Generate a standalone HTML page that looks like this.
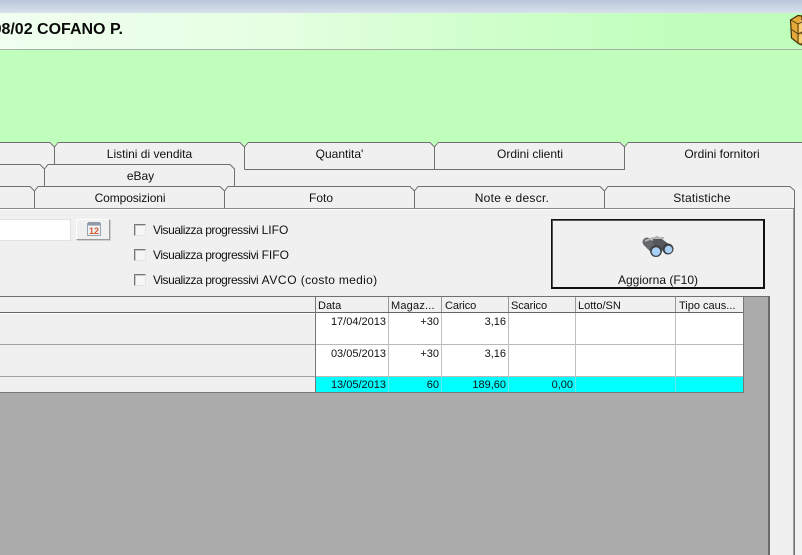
<!DOCTYPE html>
<html>
<head>
<meta charset="utf-8">
<style>
html,body{margin:0;padding:0}
body{width:802px;height:555px;overflow:hidden;position:relative;background:#f0f0f0;font-family:"Liberation Sans",sans-serif;font-size:12px;color:#111}
.a{position:absolute}
.t{position:absolute;white-space:nowrap;line-height:14px}
.c{text-align:center}
.r{text-align:right}
.v{position:absolute;width:1px}
.n{letter-spacing:-.45px}
.g{font-size:11px}
.cb{position:absolute;left:134px;width:10px;height:10px;background:#f6f6f6;border:1px solid;border-color:#777 #e4e4e4 #e4e4e4 #777;box-shadow:inset 1px 1px 0 #c8c8c8}
</style>
</head>
<body>
<div class="a" style="left:0;top:0;width:802px;height:13px;background:linear-gradient(#b9c6d9,#d8e1ec)"></div>
<div class="a" style="left:0;top:13px;width:802px;height:36px;background:linear-gradient(90deg,#f0fff0 0,#e6ffe3 33%,#d0ffcc 60%,#bfffbb 88%)"></div>
<div class="a" style="left:0;top:49px;width:802px;height:1px;background:#a9b0a9"></div>
<div class="a" style="left:0;top:50px;width:802px;height:92px;background:#bfffbb"></div>
<div class="t r" style="right:679px;top:21px;font-weight:bold;font-size:16px;line-height:18px;color:#0a0a0a">98/02 COFANO P.</div>

<svg class="a" style="left:788px;top:14px" width="14" height="32" viewBox="0 0 14 32">
<path d="M2.5 6 L10 1.5 L14 2 L14 31 L11 30 L3.5 24 Z" fill="#e4a93a" stroke="#3f2d06" stroke-width="1.2"/>
<path d="M11 8 L14 6 L14 18 L11 20 Z M11 22 L14 20 L14 29 L11 28 Z" fill="#f6cf78"/>
<path d="M3 6 L10 10 L14 8 M10 10 L10 29 M3 15 L10 20 L14 18" fill="none" stroke="#5a4210" stroke-width="1"/>
</svg>

<svg class="a" style="left:0;top:142px" width="802" height="68" viewBox="0 0 802 68">
<g fill="#f0f0f0" stroke="#707070" stroke-width="1">
<path d="M-20 27.5 V0.5 H50 L54.5 5 V27.5"/>
<path d="M54.5 27.5 V5 L58 0.5 H240 L244.5 5 V27.5"/>
<path d="M244.5 27.5 V5 L248 0.5 H430 L434.5 5 V27.5 H244.5"/>
<path d="M434.5 27.5 V5 L438 0.5 H620 L624.5 5 V27.5 H434.5"/>
<path d="M-20 49.5 V22.5 H40 L44.5 27 V49.5"/>
<path d="M44.5 49.5 V27 L48 22.5 H230 L234.5 27 V49.5"/>
<path d="M-20 66.5 V44.5 H30 L34.5 49 V66.5"/>
<path d="M34.5 66.5 V49 L38 44.5 H220 L224.5 49 V66.5"/>
<path d="M224.5 66.5 V49 L228 44.5 H410 L414.5 49 V66.5"/>
<path d="M414.5 66.5 V49 L418 44.5 H600 L604.5 49 V66.5"/>
<path d="M604.5 66.5 V49 L608 44.5 H790 L795 49 V66.5"/>
</g>
<path d="M625 1 H802 V44 H625 Z" fill="#f0f0f0"/>
<path d="M624.5 27.5 V5 L628 0.5 H802" fill="none" stroke="#707070" stroke-width="1"/>
<g fill="#bfffbb">
<path d="M51 0 H58 L54.5 4 Z"/>
<path d="M241 0 H248 L244.5 4 Z"/>
<path d="M431 0 H438 L434.5 4 Z"/>
<path d="M621 0 H628 L624.5 4 Z"/>
</g>
<path d="M0 66.5 H794" stroke="#8a8a8a" stroke-width="1"/>
<path d="M0 67.5 H793" stroke="#fff" stroke-width="1"/>
</svg>

<div class="a" style="left:793px;top:209px;width:1px;height:346px;background:#a0a0a0"></div>
<div class="a" style="left:794px;top:191px;width:1px;height:364px;background:#707070"></div>
<div class="a" style="left:795px;top:187px;width:7px;height:368px;background:#f2f2f2"></div>

<div class="t c" style="left:55px;width:189px;top:147px">Listini di vendita</div>
<div class="t c" style="left:245px;width:189px;top:147px">Quantita'</div>
<div class="t c" style="left:435px;width:190px;top:147px">Ordini clienti</div>
<div class="t c" style="left:627px;width:190px;top:147px">Ordini fornitori</div>
<div class="t c" style="left:46px;width:189px;top:169px">eBay</div>
<div class="t c" style="left:35px;width:190px;top:191px;letter-spacing:-.1px">Composizioni</div>
<div class="t c" style="left:226px;width:190px;top:191px">Foto</div>
<div class="t c" style="left:417px;width:190px;top:191px;letter-spacing:.3px">Note e descr.</div>
<div class="t c" style="left:607px;width:190px;top:191px;letter-spacing:.2px">Statistiche</div>

<div class="a" style="left:-2px;top:219px;width:71px;height:20px;background:#fff;border:1px solid #e2e2e2"></div>
<div class="a" style="left:76px;top:219px;width:32px;height:19px;background:#f0f0f0;border:1px solid;border-color:#fff #9a9a9a #9a9a9a #fff;box-shadow:1px 1px 0 #d0d0d0"></div>
<svg class="a" style="left:86px;top:221px" width="16" height="16" viewBox="0 0 16 16">
<rect x="1.5" y="2.5" width="13" height="12" fill="#eef3fa" stroke="#9aa3b0"/>
<rect x="2" y="1" width="12" height="3.5" fill="#8f98a5"/>
<text x="3" y="13" font-family="Liberation Sans" font-size="9" font-weight="bold" fill="#d9562a">12</text>
</svg>

<div class="cb" style="top:224px"></div>
<div class="cb" style="top:249px"></div>
<div class="cb" style="top:274px"></div>
<div class="t" style="left:153px;top:223px"><span class="n">Visualizza progressivi</span> LIFO</div>
<div class="t" style="left:153px;top:248px"><span class="n">Visualizza progressivi</span> FIFO</div>
<div class="t" style="left:153px;top:273px"><span class="n">Visualizza progressivi</span> <span style="letter-spacing:.6px">AVCO</span><span style="letter-spacing:.3px"> (costo medio)</span></div>

<div class="a" style="left:551px;top:219px;width:211px;height:67px;border:2px solid #111;border-top-width:1px;border-left-width:1px;background:#f0f0f0;box-shadow:inset 1px 1px 0 #555"></div>
<svg class="a" style="left:642px;top:235px" width="33" height="23" viewBox="0 0 33 23">
<path d="M5 7 L14 16" stroke="#66686c" stroke-width="9" stroke-linecap="round" fill="none"/>
<path d="M15 6 L26 14" stroke="#55575b" stroke-width="9" stroke-linecap="round" fill="none"/>
<path d="M3 6 L11 3 L22 3" stroke="#b4b6b8" stroke-width="2" fill="none"/>
<circle cx="14" cy="16" r="6" fill="#3e4044"/>
<circle cx="26" cy="14" r="5.5" fill="#3e4044"/>
<circle cx="14" cy="16.5" r="4.3" fill="#a9d0f5"/>
<circle cx="26.5" cy="14.5" r="3.8" fill="#a9d0f5"/>
</svg>
<div class="t c" style="left:553px;width:210px;top:273px">Aggiorna (F10)</div>

<!-- grid -->
<div class="a" style="left:0;top:296px;width:769px;height:259px;background:#ababab"></div>
<div class="a" style="left:768px;top:296px;width:2px;height:259px;background:#6a6a6a"></div>
<div class="a" style="left:0;top:296px;width:768px;height:1px;background:#707070"></div>
<div class="a" style="left:0;top:297px;width:743px;height:15px;background:#f0f0f0"></div>
<div class="a" style="left:0;top:312px;width:743px;height:1px;background:#666"></div>
<div class="a" style="left:0;top:313px;width:315px;height:79px;background:#f0f0f0"></div>
<div class="a" style="left:0;top:313px;width:315px;height:1px;background:#fff"></div>
<div class="a" style="left:0;top:344px;width:315px;height:1px;background:#a0a0a0"></div>
<div class="a" style="left:0;top:376px;width:315px;height:1px;background:#a0a0a0"></div>
<div class="a" style="left:316px;top:313px;width:427px;height:64px;background:#fff"></div>
<div class="a" style="left:316px;top:344px;width:427px;height:1px;background:#b8b8b8"></div>
<div class="a" style="left:316px;top:376px;width:427px;height:1px;background:#b8b8b8"></div>
<div class="a" style="left:316px;top:377px;width:427px;height:15px;background:#00ffff"></div>
<div class="a" style="left:0;top:392px;width:744px;height:1px;background:#777"></div>
<div class="a" style="left:315px;top:297px;width:1px;height:95px;background:#777"></div>
<div class="a" style="left:743px;top:297px;width:1px;height:96px;background:#777"></div>

<div class="v" style="left:388px;top:297px;height:15px;background:#999"></div>
<div class="v" style="left:441px;top:297px;height:15px;background:#999"></div>
<div class="v" style="left:508px;top:297px;height:15px;background:#999"></div>
<div class="v" style="left:575px;top:297px;height:15px;background:#999"></div>
<div class="v" style="left:675px;top:297px;height:15px;background:#999"></div>
<div class="v" style="left:388px;top:313px;height:64px;background:#c0c0c0"></div>
<div class="v" style="left:441px;top:313px;height:64px;background:#c0c0c0"></div>
<div class="v" style="left:508px;top:313px;height:64px;background:#c0c0c0"></div>
<div class="v" style="left:575px;top:313px;height:64px;background:#c0c0c0"></div>
<div class="v" style="left:675px;top:313px;height:64px;background:#c0c0c0"></div>
<div class="v" style="left:388px;top:377px;height:15px;background:#66e8e8"></div>
<div class="v" style="left:441px;top:377px;height:15px;background:#66e8e8"></div>
<div class="v" style="left:508px;top:377px;height:15px;background:#66e8e8"></div>
<div class="v" style="left:575px;top:377px;height:15px;background:#66e8e8"></div>
<div class="v" style="left:675px;top:377px;height:15px;background:#66e8e8"></div>

<div class="t g" style="left:318px;top:299px">Data</div>
<div class="t g" style="left:391px;top:299px;letter-spacing:.2px">Magaz...</div>
<div class="t g" style="left:445px;top:299px;letter-spacing:-.1px">Carico</div>
<div class="t g" style="left:511px;top:299px;letter-spacing:-.1px">Scarico</div>
<div class="t g" style="left:578px;top:299px">Lotto/SN</div>
<div class="t g" style="left:679px;top:299px">Tipo caus...</div>

<div class="t r g" style="left:316px;width:70px;top:315px">17/04/2013</div>
<div class="t r g" style="left:389px;width:50px;top:315px">+30</div>
<div class="t r g" style="left:442px;width:64px;top:315px">3,16</div>
<div class="t r g" style="left:316px;width:70px;top:347px">03/05/2013</div>
<div class="t r g" style="left:389px;width:50px;top:347px">+30</div>
<div class="t r g" style="left:442px;width:64px;top:347px">3,16</div>
<div class="t r g" style="left:316px;width:70px;top:378px">13/05/2013</div>
<div class="t r g" style="left:389px;width:50px;top:378px">60</div>
<div class="t r g" style="left:442px;width:64px;top:378px">189,60</div>
<div class="t r g" style="left:509px;width:64px;top:378px">0,00</div>
</body>
</html>
